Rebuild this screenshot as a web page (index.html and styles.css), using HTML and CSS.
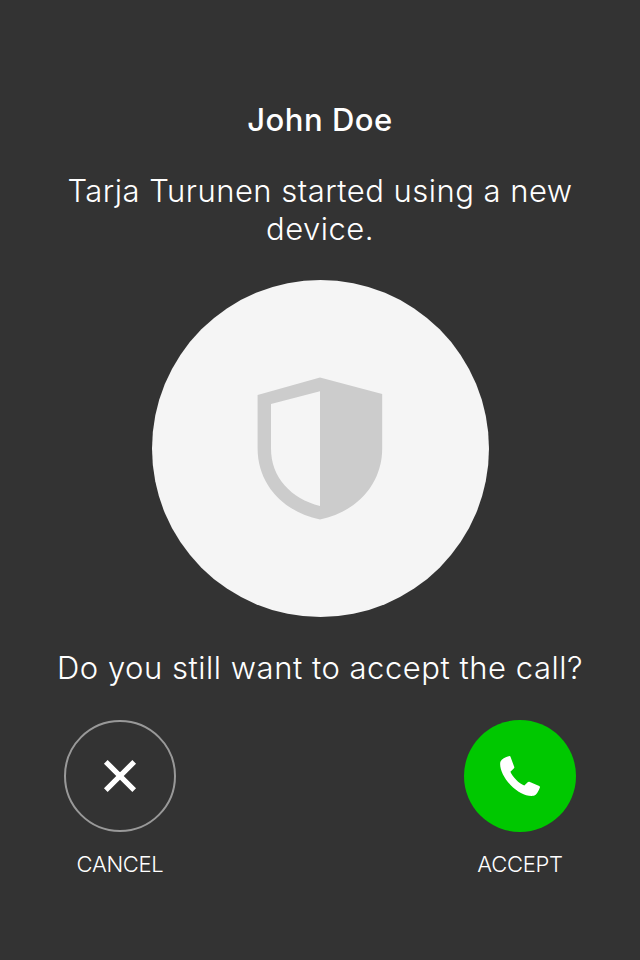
FILE: index.html
```html
<!DOCTYPE html>
<html lang="en">
<head>
<meta charset="utf-8">
<title>Incoming call</title>
<link rel="stylesheet" href="styles.css">
</head>
<body>
<main class="screen">
  <h1 class="name">John Doe</h1>
  <p class="message">Tarja Turunen started using a new<br>device.</p>
  <div class="avatar">
    <svg class="shield" viewBox="0 0 126 144"><path fill="#ccc" fill-rule="evenodd" d="M63 .4L125.2 17V71.5C125.2 108.5 98 135.5 63 142.5C28 135.5 .6 108.5 .6 71.5V18ZM63 14.2L14 27V71.5C14 100.5 34 121.5 63 129Z"/></svg>
  </div>
  <p class="question">Do you still want to accept the call?</p>
  <div class="actions">
    <div class="action">
      <button class="round cancel" aria-label="Cancel"><svg class="icon" viewBox="0 0 40 40"><path d="M5.8 5.8L34.2 34.2M34.2 5.8L5.8 34.2" stroke="#fff" stroke-width="5.2"/></svg></button>
      <span class="label">CANCEL</span>
    </div>
    <div class="action">
      <button class="round accept" aria-label="Accept"><svg class="icon" viewBox="0 0 40 40"><path fill="#fff" d="M9.5 0Q2.5 1.5 .4 5.8C-1 12 3.5 21.5 10.5 29C18 36.5 26 40.8 34 39.8Q37.5 38.2 40 31.2Q40 30.4 39.2 30L29.3 25.8Q28.4 25.5 27.7 26.2L24.3 29.6C19 27.5 12.5 21 10.4 15.8L14 12.3Q14.5 11.6 14.2 10.8L10.4 .6Q10.1 -.1 9.5 0Z"/></svg></button>
      <span class="label">ACCEPT</span>
    </div>
  </div>
</main>
</body>
</html>
```
FILE: styles.css
```css
* { box-sizing: border-box; }
body { margin: 0; background: #333; color: #fff; font-family: Inter, sans-serif; }
.screen { height: 960px; padding-top: 100px; display: flex; flex-direction: column; align-items: center; }
.name { margin: 0; font-size: 31px; line-height: 40px; font-weight: 500; letter-spacing: .5px; }
.message, .question { margin: 0; font-size: 31px; line-height: 38px; font-weight: 300; text-align: center; white-space: nowrap; letter-spacing: .48px; }
.message { margin-top: 32px; }
.avatar { margin-top: 32px; width: 337px; height: 337px; border-radius: 50%; background: #f5f5f5; display: flex; align-items: center; justify-content: center; }
.shield { width: 126px; height: 144px; }
.question { margin-top: 32px; letter-spacing: .52px; }
.actions { margin-top: 33px; width: 512px; display: flex; justify-content: space-between; }
.action { width: 112px; display: flex; flex-direction: column; align-items: center; }
.round { width: 112px; height: 112px; padding: 0; border: 0; border-radius: 50%; display: flex; align-items: center; justify-content: center; }
.cancel { background: transparent; border: 2px solid #999; }
.accept { background: #00c800; }
.icon { width: 40px; height: 40px; overflow: visible; }
.label { margin-top: 18px; font-size: 22px; line-height: 28px; font-weight: 300; letter-spacing: -.3px; }
```
